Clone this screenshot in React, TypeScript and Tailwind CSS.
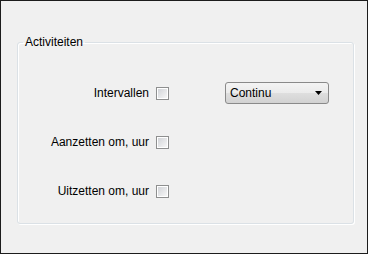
export default function App() {
  const rows = [
    { label: 'Intervallen', combo: true },
    { label: 'Aanzetten om, uur', combo: false },
    { label: 'Uitzetten om, uur', combo: false },
  ];

  return (
    <div
      className="h-[254px] w-[368px] border border-[#1c1c1c] bg-[#f0f0f0] pl-[16px] pt-[34px] text-[12px] text-black"
      style={{ fontFamily: '"Liberation Sans", Arial, sans-serif' }}
    >
      <fieldset className="h-[189px] w-[337px] rounded-[3px] border border-[#dbe1e6] shadow-[inset_1px_1px_0_#ffffff,1px_1px_0_#ffffff]">
        <legend className="ml-[5px] px-[2px] leading-[14px]">Activiteiten</legend>

        <div className="mt-[33px] flex flex-col gap-[27px]">
          {rows.map((r) => (
            <div key={r.label} className="flex h-[22px] items-center">
              <span className="w-[131px] text-right leading-[14px]">{r.label}</span>
              <Checkbox />
              {r.combo && <Combo value="Continu" />}
            </div>
          ))}
        </div>
      </fieldset>
    </div>
  );
}

function Checkbox() {
  return (
    <div className="ml-[7px] h-[13px] w-[13px] border border-[#8e8f8f] bg-white p-[1px]">
      <div className="h-full w-full bg-gradient-to-br from-[#d2d4d8] to-[#f7f7f7]" />
    </div>
  );
}

function Combo({ value }: { value: string }) {
  return (
    <div className="ml-[56px] flex h-[22px] w-[104px] items-center justify-between rounded-[3px] border border-[#8a8a8a] bg-[linear-gradient(to_bottom,#f4f4f4_0%,#ebebeb_50%,#dedede_51%,#d2d2d2_100%)] pl-[4px] pr-[6px]">
      <span className="leading-[14px]">{value}</span>
      <svg width="7" height="4" viewBox="0 0 7 4">
        <path d="M0 0h7L3.5 4z" fill="#000" />
      </svg>
    </div>
  );
}
